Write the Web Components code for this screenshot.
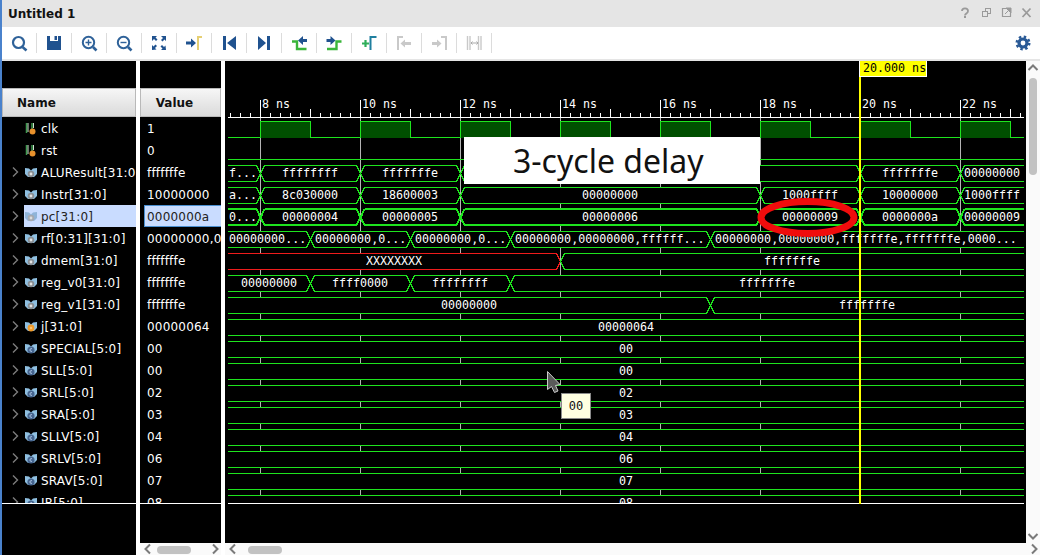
<!DOCTYPE html>
<html>
<head>
<meta charset="utf-8">
<title>Untitled 1</title>
<style>
  html, body { margin: 0; padding: 0; height: 100%; overflow: hidden; background: #fff; }
</style>
</head>
<body>
<wave-window>
  <title-bar>Untitled 1</title-bar>
  <wave-toolbar></wave-toolbar>
  <wave-panes>
    <signal-pane heading="Name">
      <name-row kind="scalar" leaf>clk</name-row>
      <name-row kind="scalar" leaf>rst</name-row>
      <name-row kind="bus">ALUResult[31:0]</name-row>
      <name-row kind="bus">Instr[31:0]</name-row>
      <name-row kind="bus" selected>pc[31:0]</name-row>
      <name-row kind="bus">rf[0:31][31:0]</name-row>
      <name-row kind="bus">dmem[31:0]</name-row>
      <name-row kind="bus">reg_v0[31:0]</name-row>
      <name-row kind="bus">reg_v1[31:0]</name-row>
      <name-row kind="int">j[31:0]</name-row>
      <name-row kind="const">SPECIAL[5:0]</name-row>
      <name-row kind="const">SLL[5:0]</name-row>
      <name-row kind="const">SRL[5:0]</name-row>
      <name-row kind="const">SRA[5:0]</name-row>
      <name-row kind="const">SLLV[5:0]</name-row>
      <name-row kind="const">SRLV[5:0]</name-row>
      <name-row kind="const">SRAV[5:0]</name-row>
      <name-row kind="const">JR[5:0]</name-row>
    </signal-pane>
    <signal-pane heading="Value" centered scroll>
      <value-row>1</value-row>
      <value-row>0</value-row>
      <value-row>fffffffe</value-row>
      <value-row>10000000</value-row>
      <value-row selected>0000000a</value-row>
      <value-row>00000000,0</value-row>
      <value-row>fffffffe</value-row>
      <value-row>fffffffe</value-row>
      <value-row>fffffffe</value-row>
      <value-row>00000064</value-row>
      <value-row>00</value-row>
      <value-row>00</value-row>
      <value-row>02</value-row>
      <value-row>03</value-row>
      <value-row>04</value-row>
      <value-row>06</value-row>
      <value-row>07</value-row>
      <value-row>08</value-row>
    </signal-pane>
    <wave-canvas>
      <wave-note>3-cycle delay</wave-note>
      <wave-tooltip>00</wave-tooltip>
    </wave-canvas>
  </wave-panes>
</wave-window>

<script>
const UI_FONT = '"DejaVu Sans", "Liberation Sans", sans-serif';
const MONO_FONT = '"DejaVu Sans Mono", "Liberation Mono", monospace';

class WaveWindow extends HTMLElement {
  connectedCallback() {
    this.attachShadow({ mode: 'open' });
    this.shadowRoot.innerHTML = `
      <style>
        :host {
          display: flex;
          flex-direction: column;
          width: 1040px;
          height: 555px;
          box-sizing: border-box;
          border-left: 2px solid #4a82cc;
          background: #fff;
          font: 12px ${UI_FONT};
        }
      </style>
      <slot></slot>
    `;
  }
}

class TitleBar extends HTMLElement {
  connectedCallback() {
    this.attachShadow({ mode: 'open' });
    this.shadowRoot.innerHTML = `
      <style>
        :host {
          display: flex;
          align-items: center;
          flex: none;
          height: 27px;
          padding: 0 4px 0 6px;
          background: #e5e5e5;
          color: #111;
          font-weight: 700;
        }
        .btns { margin-left: auto; display: flex; }
        svg { display: block; }
      </style>
      <slot></slot>
      <div class="btns">
        <svg width="80" height="27" viewBox="0 0 80 27" fill="none" stroke="#9a9a9a" stroke-width="1.600">
          <path d="M6 11c0-3.500 6-3.500 6 0 0 2.500-3 2.500-3 4.500" stroke-width="1.800"/>
          <rect x="8" y="16" width="2" height="2" fill="#9a9a9a" stroke="none"/>
          <rect x="29.500" y="8.500" width="5" height="5" stroke-width="1"/>
          <rect x="26.500" y="11.500" width="5" height="5" fill="#e5e5e5" stroke-width="1"/>
          <path d="M50 8.500h-3.500v8h8v-3.500" stroke-width="1.200"/>
          <path d="M50 8h5v5zM49 14l4-4" fill="#9a9a9a" stroke-width="1"/>
          <path d="M66.500 8.500l8 8.500M74.500 8.500l-8 8.500" stroke-width="1.800"/>
        </svg>
      </div>
    `;
  }
}

// icon drawings live in a 34x32 box, one per toolbar button
const NAVY = '#20528f';
const GREEN = '#3ab53a';
const OFF = '#c9c9c9';
const TOOL_ICONS = [
  `<circle cx="16.500" cy="15.500" r="5.500" fill="none" stroke="#2f6299" stroke-width="2.200"/><path d="M20.500 20l4 3.500" stroke="#2f6299" stroke-width="2.600"/>`,
  `<path fill="${NAVY}" d="M10 9h14v14H10z"/><path fill="#fff" d="M13 9h8v5h-8z"/><path fill="${NAVY}" d="M17.500 9h2.500v4h-2.500z"/>`,
  `<circle cx="16.500" cy="15.500" r="5.700" fill="none" stroke="#2f6299" stroke-width="2"/><path d="M21 20l3.500 3.500" stroke="#2f6299" stroke-width="2.600"/><path d="M16.500 12.500v6M13.500 15.500h6" stroke="#2f6299" stroke-width="1.400"/>`,
  `<circle cx="16.500" cy="15.500" r="5.700" fill="none" stroke="#2f6299" stroke-width="2"/><path d="M21 20l3.500 3.500" stroke="#2f6299" stroke-width="2.600"/><path d="M13.500 15.500h6" stroke="#2f6299" stroke-width="1.400"/>`,
  `<path fill="${NAVY}" d="M10 9h5l-1.500 1.500 2 2-1.500 1.500-2-2L10 14zM24 9v5l-1.500-1.500-2 2-1.500-1.500 2-2L19 9zM10 23v-5l1.500 1.500 2-2 1.500 1.500-2 2 1.500 1.500zM24 23h-5l1.500-1.500-2-2 1.500-1.500 2 2 1.500-1.500z"/>`,
  `<path fill="${NAVY}" d="M9 14.500h5v-3l5 4.500-5 4.500v-3H9z"/><path fill="#e6cf73" d="M20 9h5v2h-3v12h-2z"/>`,
  `<path fill="${NAVY}" d="M11 9h3v14h-3zM24 9v14l-9-7z"/>`,
  `<path fill="${NAVY}" d="M20 9h3v14h-3zM11 9v14l8-7z"/>`,
  `<path fill="none" stroke="${GREEN}" stroke-width="2.400" d="M10 14.500h5v7.500h9.500"/><path fill="${NAVY}" d="M16 13.500l5-4.500v3h4v3h-4v3z"/>`,
  `<path fill="none" stroke="${GREEN}" stroke-width="2.400" d="M10 22h9.500v-7.500h5"/><path fill="${NAVY}" d="M18.500 13.500l-5 4.500v-3h-4v-3h4V9z"/>`,
  `<path fill="none" stroke="#2fae5a" stroke-width="2.200" d="M10 16.500h7M13.500 13v7"/><path fill="#1f7f9f" d="M17.500 9h7v2h-5v12h-2z"/>`,
  `<path fill="${OFF}" d="M10 9h6v2h-4v12h-2zM13.500 16.500l4.500-4v2.500h6v3h-6v2.500z"/>`,
  `<path fill="${OFF}" d="M19 9h6v14h-2V11h-4zM10 15h5v-2.500l4.500 4-4.500 4V18h-5z"/>`,
  `<path fill="none" stroke="${OFF}" stroke-width="1.400" d="M10.500 9v14M13 9v14M21.500 9v14M24 9v14"/><path fill="none" stroke="#a9a9a9" stroke-width="1" d="M14 16h7M15.500 14.500L14 16l1.500 1.500M19.500 14.500L21 16l-1.500 1.500"/>`
];

class WaveToolbar extends HTMLElement {
  connectedCallback() {
    this.attachShadow({ mode: 'open' });
    const btns = TOOL_ICONS.map(i => `<div class="btn"><svg width="34" height="32" viewBox="0 0 34 32">${i}</svg></div>`).join('');
    this.shadowRoot.innerHTML = `
      <style>
        :host {
          display: flex;
          align-items: center;
          flex: none;
          height: 34px;
          box-sizing: border-box;
          background: #fff;
          border-bottom: 2px solid #e5e5e5;
        }
        .btn { position: relative; flex: none; width: 35px; height: 32px; }
        .btn::after {
          content: '';
          position: absolute;
          right: 0;
          top: 6px;
          height: 20px;
          width: 1px;
          background: #dcdcdc;
        }
        svg { display: block; }
        .gear { margin-left: auto; margin-right: 9px; }
      </style>
      ${btns}
      <svg class="gear" width="16" height="16" viewBox="0 0 16 16">
        <circle cx="8" cy="8" r="6.200" fill="none" stroke="#2a5a96" stroke-width="2.600" stroke-dasharray="2.400 2.470"/>
        <circle cx="8" cy="8" r="4" fill="none" stroke="#2a5a96" stroke-width="3.200"/>
      </svg>
    `;
  }
}

class WavePanes extends HTMLElement {
  connectedCallback() {
    this.attachShadow({ mode: 'open' });
    this.shadowRoot.innerHTML = `
      <style>
        :host {
          display: flex;
          flex: 1;
          min-height: 0;
          gap: 4px;
          background: #fff;
        }
      </style>
      <slot></slot>
    `;
  }
}

class SignalPane extends HTMLElement {
  connectedCallback() {
    this.attachShadow({ mode: 'open' });
    const isValue = this.hasAttribute('scroll');
    this.shadowRoot.innerHTML = `
      <style>
        :host {
          display: flex;
          flex-direction: column;
          flex: none;
          width: ${isValue ? 81 : 134}px;
          background: #000;
          color: #fff;
        }
        .top { flex: none; height: 27px; }
        .head {
          flex: none;
          height: 29px;
          box-sizing: border-box;
          display: flex;
          align-items: center;
          justify-content: ${isValue ? 'center' : 'flex-start'};
          padding: ${isValue ? '0 12px 0 0' : '0 0 0 14px'};
          background: linear-gradient(#f6f6f6, #dadada);
          border: 1px solid #b9b9b9;
          color: #111;
          font-weight: 700;
        }
        .rows { flex: none; height: 386px; overflow: hidden; }
        .end { flex: none; height: 1px; background: #fff; }
        .rest { flex: 1; }
      </style>
      <div class="top"></div>
      <div class="head">${this.getAttribute('heading')}</div>
      <div class="rows"><slot></slot></div>
      <div class="end"></div>
      <div class="rest"></div>
      ${isValue ? '<scroll-bar start="17" size="34"></scroll-bar>' : ''}
    `;
  }
}

const SIGNAL_ICONS = {
  scalar: `<path fill="none" stroke="#3f9a4f" stroke-width="1.500" d="M1.500 0v10M7 0v6"/><path fill="none" stroke="#cfe3cf" stroke-width="1" d="M3 0v9M8.500 0v5"/><circle cx="7.500" cy="8.500" r="3" fill="#e8912c"/>`,
  bus: `<path fill="#8fbfe0" d="M0 1l4 .5 2 2 2-2 4-.5v6l-3 3H3L0 7z"/><circle cx="6" cy="7" r="3.300" fill="#8a8f94"/><circle cx="6" cy="7" r="1.400" fill="#e4e4e4"/>`,
  busoff: `<path fill="#8fb4d8" d="M0 1l4 .5 2 2 2-2 4-.5v6l-3 3H3L0 7z"/><circle cx="6" cy="7" r="3.300" fill="#a4a9b0"/><circle cx="6" cy="7" r="1.400" fill="#dcdcdc"/>`,
  int: `<path fill="#8fbfe0" d="M0 1l4 .5 2 2 2-2 4-.5v6l-3 3H3L0 7z"/><circle cx="6" cy="7" r="3.400" fill="#ef9a2a"/><circle cx="6" cy="7" r="1.300" fill="#ffc46e"/>`,
  const: `<path fill="#8fbfe0" d="M0 1l4 .5 2 2 2-2 4-.5v6l-3 3H3L0 7z"/><circle cx="6" cy="7" r="3.600" fill="#46658f"/><path fill="none" stroke="#b9d0ee" stroke-width=".9" d="M7 5.800a1.400 1.400 0 1 0 0 2.400"/>`
};

class NameRow extends HTMLElement {
  connectedCallback() {
    this.attachShadow({ mode: 'open' });
    const selected = this.hasAttribute('selected');
    let kind = this.getAttribute('kind');
    if (selected) kind = 'busoff';
    const chevron = this.hasAttribute('leaf') ? '' :
      `<svg width="7" height="10" viewBox="0 0 7 10"><path d="M1 0.500L5.500 5 1 9.500" fill="none" stroke="#7d7d7d" stroke-width="1.400"/></svg>`;
    this.shadowRoot.innerHTML = `
      <style>
        :host {
          display: flex;
          height: 22px;
          white-space: nowrap;
          overflow: hidden;
          letter-spacing: .2px;
        }
        .arrow {
          flex: none;
          width: 12px;
          padding-left: 10px;
          display: flex;
          align-items: center;
        }
        .cell {
          flex: 1;
          display: flex;
          align-items: center;
          box-sizing: border-box;
          min-width: 0;
          padding: 1px 0 0 1px;
          gap: 4px;
        }
        :host([selected]) .cell { background: #c9dcff; color: #222; }
        svg { display: block; flex: none; }
        .icon { margin-top: 1px; align-self: center; }
      </style>
      <div class="arrow">${chevron}</div>
      <div class="cell">
        <svg class="icon" width="12" height="12" viewBox="0 0 12 12">${SIGNAL_ICONS[kind]}</svg>
        <span><slot></slot></span>
      </div>
    `;
  }
}

class ValueRow extends HTMLElement {
  connectedCallback() {
    this.attachShadow({ mode: 'open' });
    this.shadowRoot.innerHTML = `
      <style>
        :host {
          display: block;
          height: 22px;
          padding-left: 4px;
          white-space: nowrap;
          overflow: hidden;
          letter-spacing: .2px;
        }
        .cell {
          display: flex;
          align-items: center;
          box-sizing: border-box;
          height: 22px;
          padding: 1px 0 0 3px;
        }
        :host([selected]) .cell {
          background: #c9dcff;
          border: 1px solid #4a8fd0;
          border-right: 0;
          padding: 1px 0 0 2px;
          color: #222;
        }
      </style>
      <div class="cell"><slot></slot></div>
    `;
  }
}

class ScrollBar extends HTMLElement {
  connectedCallback() {
    this.attachShadow({ mode: 'open' });
    const start = +this.getAttribute('start');
    const size = +this.getAttribute('size');
    const vertical = this.getAttribute('orient') === 'v';
    const chevron = d => `<svg width="12" height="12" viewBox="0 0 12 12"><path d="${d}" fill="none" stroke="#7a7a7a" stroke-width="2"/></svg>`;
    this.shadowRoot.innerHTML = vertical ? `
      <style>
        :host { display: flex; flex-direction: column; align-items: center; flex: none; width: 14px; background: #fafafa; height: 482px; }
        .a { flex: none; height: 14px; display: flex; align-items: center; justify-content: center; }
        .t { flex: none; width: 8px; height: ${size}px; margin-top: ${start - 14}px; border-radius: 4px; background: #c2c2c2; }
        .b { margin-top: auto; }
        svg { display: block; }
      </style>
      <div class="a">${chevron('M1.500 8L6 3.500 10.500 8')}</div>
      <div class="t"></div>
      <div class="a b">${chevron('M1.500 4L6 8.500 10.500 4')}</div>
    ` : `
      <style>
        :host { display: flex; align-items: center; flex: none; height: 12px; background: #fafafa; }
        .a { flex: none; display: flex; align-items: center; justify-content: center; }
        .l { width: 16px; }
        .r { width: 12px; margin-left: auto; }
        .t { flex: none; height: 8px; width: ${size}px; margin-left: ${start - 16}px; margin-top: 2px; border-radius: 4px; background: #c2c2c2; }
        svg { display: block; }
      </style>
      <div class="a l">${chevron('M8 1.500L3.500 6 8 10.500')}</div>
      <div class="t"></div>
      <div class="a r">${chevron('M4 1.500L8.500 6 4 10.500')}</div>
    `;
  }
}

// each row: list of segments [from, to, text, align, colour]; x values are page pixels
const L = 228, R = 1024;
const BUS_ROWS = [
  { segs: [[L,260,'f...','l'],[260,360,'ffffffff'],[360,460,'fffffffe'],[460,860,''],[860,960,'fffffffe'],[960,R,'00000000']] },
  { segs: [[L,260,'a...','l'],[260,360,'8c030000'],[360,460,'18600003'],[460,760,'00000000'],[760,860,'1000ffff'],[860,960,'10000000'],[960,R,'1000ffff']] },
  { thick: true, segs: [[L,260,'0...','l'],[260,360,'00000004'],[360,460,'00000005'],[460,760,'00000006'],[760,860,'00000009'],[860,960,'0000000a'],[960,R,'00000009']] },
  { segs: [[L,310,'00000000...','l'],[310,410,'00000000,0...','l'],[410,510,'00000000,0...','l'],[510,710,'00000000,00000000,ffffff...','l'],[710,R,'00000000,00000000,fffffffe,fffffffe,0000...','l']] },
  { segs: [[L,560,'XXXXXXXX',null,'#ee1c1c'],[560,R,'fffffffe']] },
  { segs: [[L,310,'00000000'],[310,410,'ffff0000'],[410,510,'ffffffff'],[510,R,'fffffffe']] },
  { segs: [[L,710,'00000000'],[710,R,'fffffffe']] },
  { segs: [[L,R,'00000064']] },
  { segs: [[L,R,'00']] },
  { segs: [[L,R,'00']] },
  { segs: [[L,R,'02']] },
  { segs: [[L,R,'03']] },
  { segs: [[L,R,'04']] },
  { segs: [[L,R,'06']] },
  { segs: [[L,R,'07']] },
  { segs: [[L,R,'08']] }
];
const WAVE_GREEN = '#1ee41e';

function busRow(row, top) {
  const t = row.thick ? top : top + .5;
  const b = row.thick ? top + 16 : top + 16.5;
  const mid = top + 8.5;
  let out = '';
  for (const [x0, x1, text, align, color] of row.segs) {
    const a = x0 === L ? x0 : x0 + 4.5;
    const z = x1 === R ? x1 : x1 - 3.5;
    const fill = `M${a} ${t}H${z}` + (x1 === R ? `V${b}` : `L${x1 + .5} ${mid}L${z} ${b}`) +
      `H${a}` + (x0 === L ? '' : `L${x0 + .5} ${mid}`) + 'Z';
    let line = `M${a} ${t}H${z}`;
    line += x1 === R ? `M${z} ${b}` : `L${x1 + .5} ${mid}L${z} ${b}`;
    line += `H${a}`;
    if (x0 !== L) line += `L${x0 + .5} ${mid}L${a} ${t}`;
    out += `<path d="${fill}" fill="#000"/>`;
    out += `<path d="${line}" fill="none" stroke="${color || WAVE_GREEN}" stroke-width="${row.thick ? 2 : 1}"/>`;
    if (!text) continue;
    if (align === 'l') {
      out += `<text x="${x0 === L ? x0 + 1 : x0 + 5}" y="${top + 12}">${text}</text>`;
    } else {
      out += `<text x="${(x0 + x1) / 2}" y="${top + 12}" text-anchor="middle">${text}</text>`;
    }
  }
  return out;
}

class WaveCanvas extends HTMLElement {
  connectedCallback() {
    this.attachShadow({ mode: 'open' });
    let grid = '', ruler = `<path d="M${L} 117.500H${R}" stroke="#fff"/>`, labels = '';
    for (let x = 230; x <= R; x += 10) {
      const k = (x - 260) / 50;
      const even = (x - 260) % 100 === 0;
      const y0 = even ? 100 : Number.isInteger(k) ? 109 : 113;
      ruler += `<path d="M${x + .5} ${y0}V118" stroke="#fff"/>`;
      if (even) {
        const ns = 8 + (x - 260) / 50;
        labels += `<text x="${x + 2}" y="108">${ns} ns</text>`;
        grid += `<path d="M${x + .5} 118V503" stroke="#b4b4b4"/>`;
      }
    }

    // clock row
    let clk = '', rise = [];
    for (let x = 260; x < R; x += 100) rise.push(x);
    for (const x of rise) {
      clk += `<path d="M${x + .5} 137.500V121.500H${x + 50.500}V137.500" fill="#004f00" stroke="${WAVE_GREEN}"/>`;
    }
    let low = `M${L} 137.500H260.500`;
    for (const x of rise) low += `M${x + 50.500} 137.500H${Math.min(x + 100.500, R)}`;
    clk += `<path d="${low}" fill="none" stroke="${WAVE_GREEN}"/>`;
    clk += `<path d="M${L} 159.500H${R}" stroke="${WAVE_GREEN}"/>`;

    const buses = BUS_ROWS.map((r, i) => busRow(r, 165 + i * 22)).join('');

    this.shadowRoot.innerHTML = `
      <style>
        :host {
          position: relative;
          display: flex;
          flex-wrap: wrap;
          flex: 1;
          min-width: 0;
          align-content: flex-start;
          background: #000;
        }
        .area { position: relative; flex: none; width: 801px; height: 482px; }
        svg.wave { display: block; width: 801px; height: 482px; }
        text { font: 11.67px ${MONO_FONT}; fill: #fff; }
        scroll-bar.h { flex: none; width: 815px; }
        .stamp {
          position: absolute;
          left: 634px;
          top: 0;
          width: 68px;
          height: 16px;
          box-sizing: border-box;
          border: 1px solid #fff;
          border-top: 0;
          background: #ff0;
          color: #000;
          font: 11.67px/15px ${MONO_FONT};
          padding-left: 3px;
          white-space: nowrap;
        }
      </style>
      <div class="area">
        <svg class="wave" viewBox="225 61 801 482" shape-rendering="crispEdges">
          <defs><clipPath id="sheet"><rect x="${L}" y="61" width="${R - L}" height="442"/></clipPath></defs>
          <g clip-path="url(#sheet)">
            ${grid}${ruler}${labels}${clk}${buses}
          </g>
          <path d="M${L} 503.500H${R}" stroke="#fff"/>
          <rect x="859" y="77" width="2" height="426.500" fill="#ff0"/>
          <ellipse cx="807.500" cy="217.500" rx="46.500" ry="16" fill="none" stroke="#f00c0c" stroke-width="7" shape-rendering="auto"/>
          <path d="M547.500 371.500L560 384.500 555.500 385.500 558 391 554.500 392.500 551.500 386.500 547.500 389.500Z" fill="#5a5a5a" stroke="#c9c9c9" shape-rendering="auto"/>
        </svg>
        <div class="stamp">20.000 ns</div>
        <slot></slot>
      </div>
      <scroll-bar orient="v" start="17" size="97"></scroll-bar>
      <scroll-bar class="h" start="23" size="34"></scroll-bar>
    `;
  }
}

class WaveNote extends HTMLElement {
  connectedCallback() {
    this.attachShadow({ mode: 'open' });
    this.shadowRoot.innerHTML = `
      <style>
        :host {
          position: absolute;
          left: 239px;
          top: 76px;
          width: 296px;
          height: 47px;
          box-sizing: border-box;
          display: flex;
          align-items: center;
          padding-left: 49px;
          background: #fff;
          color: #111;
          font: 32px "Noto Sans", "Open Sans", sans-serif;
          white-space: nowrap;
        }
      </style>
      <slot></slot>
    `;
  }
}

class WaveTooltip extends HTMLElement {
  connectedCallback() {
    this.attachShadow({ mode: 'open' });
    this.shadowRoot.innerHTML = `
      <style>
        :host {
          position: absolute;
          left: 336px;
          top: 332px;
          width: 30px;
          height: 26px;
          box-sizing: border-box;
          display: flex;
          align-items: center;
          justify-content: center;
          background: #ffffe1;
          border: 1px solid #8a8a8a;
          color: #111;
          font: 12px ${MONO_FONT};
        }
      </style>
      <slot></slot>
    `;
  }
}

customElements.define('wave-window', WaveWindow);
customElements.define('title-bar', TitleBar);
customElements.define('wave-toolbar', WaveToolbar);
customElements.define('wave-panes', WavePanes);
customElements.define('scroll-bar', ScrollBar);
customElements.define('signal-pane', SignalPane);
customElements.define('name-row', NameRow);
customElements.define('value-row', ValueRow);
customElements.define('wave-canvas', WaveCanvas);
customElements.define('wave-note', WaveNote);
customElements.define('wave-tooltip', WaveTooltip);
</script>
</body>
</html>
